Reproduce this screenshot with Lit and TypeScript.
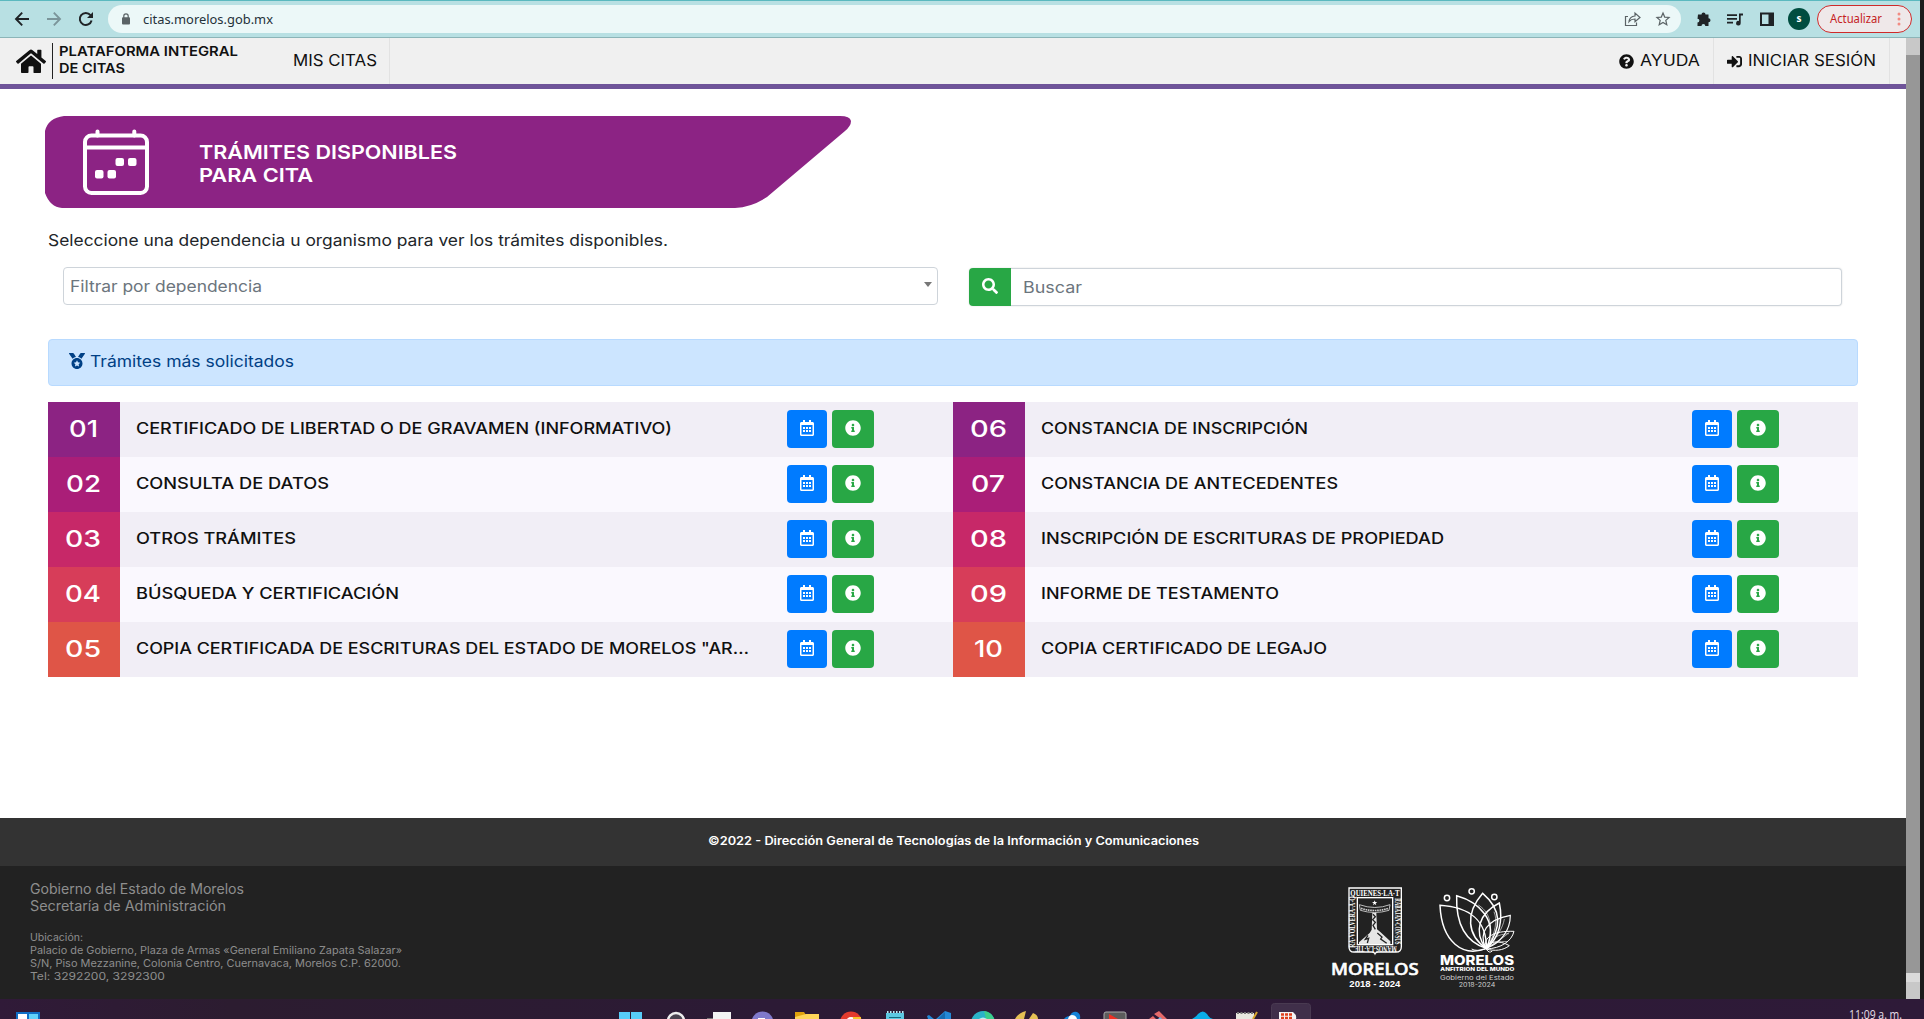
import { LitElement, html, svg, css } from "lit";
import { customElement } from "lit/decorators.js";

const P = {
  home: "M280.37 148.26L96 300.11V464a16 16 0 0 0 16 16l112.06-.29a16 16 0 0 0 15.92-16V368a16 16 0 0 1 16-16h64a16 16 0 0 1 16 16v95.64a16 16 0 0 0 16 16.05L464 480a16 16 0 0 0 16-16V300L295.67 148.26a12.19 12.19 0 0 0-15.3 0zM571.6 251.47L488 182.56V44.05a12 12 0 0 0-12-12h-56a12 12 0 0 0-12 12v72.61L318.47 43a48 48 0 0 0-61 0L4.34 251.47a12 12 0 0 0-1.6 16.9l25.5 31A12 12 0 0 0 45.15 301l235.22-193.74a12.19 12.19 0 0 1 15.3 0L530.9 301a12 12 0 0 0 16.9-1.6l25.5-31a12 12 0 0 0-1.7-16.93z",
  info: "M256 8C119.043 8 8 119.083 8 256c0 136.997 111.043 248 248 248s248-111.003 248-248C504 119.083 392.957 8 256 8zm0 110c23.196 0 42 18.804 42 42s-18.804 42-42 42-42-18.804-42-42 18.804-42 42-42zm56 254c0 6.627-5.373 12-12 12h-88c-6.627 0-12-5.373-12-12v-24c0-6.627 5.373-12 12-12h12v-64h-12c-6.627 0-12-5.373-12-12v-24c0-6.627 5.373-12 12-12h64c6.627 0 12 5.373 12 12v100h12c6.627 0 12 5.373 12 12v24z",
  question: "M504 256c0 136.997-111.043 248-248 248S8 392.997 8 256C8 119.083 119.043 8 256 8s248 111.083 248 248zM262.655 90c-54.497 0-89.255 22.957-116.549 63.758-3.536 5.286-2.353 12.415 2.715 16.258l34.699 26.31c5.205 3.947 12.621 3.008 16.665-2.122 17.864-22.658 30.113-35.797 57.303-35.797 20.429 0 45.698 13.148 45.698 32.958 0 14.976-12.363 22.667-32.534 33.976C247.128 238.528 216 254.941 216 296v4c0 6.627 5.373 12 12 12h56c6.627 0 12-5.373 12-12v-1.333c0-28.462 83.186-29.647 83.186-106.667 0-58.002-60.165-102-116.531-102zM256 338c-25.365 0-46 20.635-46 46 0 25.364 20.635 46 46 46s46-20.636 46-46c0-25.365-20.635-46-46-46z",
  login: "M416 448h-84c-6.6 0-12-5.4-12-12v-40c0-6.600 5.400-12 12-12h84c17.700 0 32-14.300 32-32V160c0-17.700-14.300-32-32-32h-84c-6.600 0-12-5.400-12-12V76c0-6.600 5.400-12 12-12h84c53 0 96 43 96 96v192c0 53-43 96-96 96zm-47-201L201 79c-15-15-41-4.500-41 17v96H24c-13.300 0-24 10.700-24 24v96c0 13.300 10.700 24 24 24h136v96c0 21.500 26 32 41 17l168-168c9.300-9.400 9.300-24.600 0-34z",
  calendar: "M148 288h-40c-6.600 0-12-5.400-12-12v-40c0-6.600 5.400-12 12-12h40c6.600 0 12 5.400 12 12v40c0 6.600-5.400 12-12 12zm108-12v-40c0-6.600-5.400-12-12-12h-40c-6.600 0-12 5.400-12 12v40c0 6.600 5.400 12 12 12h40c6.600 0 12-5.400 12-12zm96 0v-40c0-6.600-5.400-12-12-12h-40c-6.600 0-12 5.400-12 12v40c0 6.600 5.400 12 12 12h40c6.600 0 12-5.400 12-12zm-96 96v-40c0-6.600-5.400-12-12-12h-40c-6.600 0-12 5.400-12 12v40c0 6.600 5.400 12 12 12h40c6.600 0 12-5.400 12-12zm-96 0v-40c0-6.600-5.400-12-12-12h-40c-6.600 0-12 5.400-12 12v40c0 6.600 5.400 12 12 12h40c6.600 0 12-5.400 12-12zm192 0v-40c0-6.600-5.400-12-12-12h-40c-6.600 0-12 5.400-12 12v40c0 6.600 5.400 12 12 12h40c6.600 0 12-5.400 12-12zm96-260v352c0 26.500-21.500 48-48 48H48c-26.500 0-48-21.500-48-48V112c0-26.500 21.500-48 48-48h48V12c0-6.600 5.400-12 12-12h40c6.600 0 12 5.400 12 12v52h128V12c0-6.600 5.400-12 12-12h40c6.600 0 12 5.400 12 12v52h48c26.500 0 48 21.500 48 48zm-48 346V160H48v298c0 3.300 2.700 6 6 6h340c3.300 0 6-2.700 6-6z",
  search: "M505 442.7L405.3 343c-4.500-4.500-10.600-7-17-7H372c27.600-35.300 44-79.700 44-128C416 93.100 322.900 0 208 0S0 93.100 0 208s93.100 208 208 208c48.300 0 92.700-16.400 128-44v16.300c0 6.400 2.500 12.500 7 17l99.700 99.700c9.400 9.400 24.600 9.400 33.900 0l28.300-28.300c9.400-9.400 9.400-24.600.1-34zM208 336c-70.700 0-128-57.200-128-128 0-70.700 57.200-128 128-128 70.700 0 128 57.200 128 128 0 70.700-57.200 128-128 128z",
  medal: "M223.750 130.750L154.620 15.540A32 32 0 0 0 127.180 0H16.030C3.080 0-4.500 14.570 2.920 25.180l111.270 158.960c29.720-27.770 67.520-46.830 109.560-53.390zM495.970 0H384.820c-11.240 0-21.660 5.900-27.440 15.540l-69.130 115.210c42.040 6.560 79.840 25.620 109.560 53.380L509.080 25.180C516.500 14.570 508.920 0 495.970 0zM256 160c-97.200 0-176 78.800-176 176s78.800 176 176 176 176-78.800 176-176-78.800-176-176-176zM256 232l32 66 72 10-52 50 13 72-65-34-65 34 13-72-52-50 72-10z",
};

const icon = (d: string, w: number, h: number, vb = "0 0 512 512") =>
  html`<svg class="ico" width=${w} height=${h} viewBox=${vb}><path fill="currentColor" fill-rule="evenodd" d=${d}></path></svg>`;

/* One line of text set to a fixed measure: w = measure, size = font size,
   h = line box height, b = baseline inside that box. */
const line = (s: string, w: number, size: number, h: number, b: number, weight = 400) =>
  html`<svg class="line" width=${w} height=${h}><text x="0" y=${b} font-size=${size} font-weight=${weight} textLength=${w} lengthAdjust="spacingAndGlyphs">${s}</text></svg>`;

type Item = { n: string; nw: number; title: string; w: number };
const LEFT: Item[] = [
  { n: "01", nw: 29, title: "CERTIFICADO DE LIBERTAD O DE GRAVAMEN (INFORMATIVO)", w: 536 },
  { n: "02", nw: 35, title: "CONSULTA DE DATOS", w: 193 },
  { n: "03", nw: 36, title: "OTROS TRÁMITES", w: 160 },
  { n: "04", nw: 36, title: "BÚSQUEDA Y CERTIFICACIÓN", w: 263 },
  { n: "05", nw: 36, title: "COPIA CERTIFICADA DE ESCRITURAS DEL ESTADO DE MORELOS \"AR…", w: 613 },
];
const RIGHT: Item[] = [
  { n: "06", nw: 37, title: "CONSTANCIA DE INSCRIPCIÓN", w: 267 },
  { n: "07", nw: 34, title: "CONSTANCIA DE ANTECEDENTES", w: 297 },
  { n: "08", nw: 37, title: "INSCRIPCIÓN DE ESCRITURAS DE PROPIEDAD", w: 403 },
  { n: "09", nw: 37, title: "INFORME DE TESTAMENTO", w: 238 },
  { n: "10", nw: 29, title: "COPIA CERTIFICADO DE LEGAJO", w: 286 },
];

@customElement("browser-bar")
export class BrowserBar extends LitElement {
  static styles = css`
    :host { display: flex; box-sizing: border-box; height: 38px; align-items: center; background: #b8e0e3; border-top: 1px solid #5bb9bf; border-bottom: 1px solid #8cb5b8; color: #1f2326; padding: 0 8px 0 15px; font-family: "Noto Sans", "Open Sans", sans-serif; }
    svg { display: block; flex: none; overflow: visible; }
    .nav { display: flex; gap: 18px; width: 93px; }
    .nav svg { width: 14px; height: 14px; }
    .pill { box-sizing: border-box; width: 1573px; height: 28px; border-radius: 14px; background: #ecf8f8; display: flex; align-items: center; padding: 0 5px 0 14px; flex: none; }
    .url { margin-left: 13px; flex: 1; }
    .tools { display: flex; align-items: center; margin-left: 15px; }
    .avatar { width: 22px; height: 22px; border-radius: 50%; background: #004d40; color: #fff; font-size: 10px; font-weight: 700; line-height: 21px; text-align: center; margin-left: 12px; }
    .update { box-sizing: border-box; width: 95px; height: 28px; border: 1px solid #cf2a2a; border-radius: 14px; background: #efe8e9; margin-left: 7px; display: flex; align-items: center; justify-content: space-between; padding: 0 10px 0 12px; }
  `;
  render() {
    return html`
      <div class="nav">
        <svg viewBox="0 0 14 14" fill="none" stroke="#1f2326" stroke-width="1.9"><path d="M14 7H1.500M7.200 .7L1 7l6.200 6.300"></path></svg>
        <svg viewBox="0 0 14 14" fill="none" stroke="#7b959a" stroke-width="1.900"><path d="M0 7h12.500M6.800 .7L13 7l-6.200 6.300"></path></svg>
        <svg viewBox="0 0 14 14" fill="none" stroke="#1f2326" stroke-width="2"><path d="M12.600 8.500A6 6 0 1 1 11.500 3.200"></path><path d="M14 0v6H8z" fill="#1f2326" stroke="none"></path></svg>
      </div>
      <div class="pill">
        <svg width="8" height="12" viewBox="0 0 8 12"><rect y="4.300" width="8" height="7.200" rx="1" fill="#5b6366"></rect><path d="M1.800 5V3a2.200 2.200 0 0 1 4.400 0v2" fill="none" stroke="#5b6366" stroke-width="1.200"></path></svg>
        <svg class="url" height="28"><text x="0" y="18.500" font-size="13" fill="#25323a" textLength="130" lengthAdjust="spacingAndGlyphs">citas.morelos.gob.mx</text></svg>
        <svg width="52" height="16" viewBox="0 0 52 16" fill="none" stroke="#5b6366" stroke-width="1.200"><path d="M4 5.500H1.500v9h11v-3M5 10.500c.5-3.800 2.500-5.300 6-5.500V2l5 4.500-5 4.300V8c-3 0-4.500.7-6 2.500z"></path><path d="M39 2l1.700 4.100 4.400.4-3.300 2.900 1 4.300L39 11.400l-3.800 2.300 1-4.300-3.300-2.900 4.400-.4z"></path></svg>
      </div>
      <div class="tools">
        <svg width="80" height="16" viewBox="0 0 80 16" fill="#1f2326"><path d="M2 3.500h3.500a2 2 0 0 1 4 0h3v3.700a2 2 0 0 1 0 4V15H9.300a1.900 1.900 0 0 0-3.800 0H1.500v-3.500a1.900 1.900 0 0 0 0-3.800z"></path><path d="M31 3.200h10v1.700H31zm0 3.800h10v1.700H31zm0 3.800h6v1.700h-6zM43 2.500h4v2h-2.300v7.700a2.300 2.300 0 1 1-1.700-2.200z"></path><path fill-rule="evenodd" d="M64 1.500h14v13.500H64zm2 2v9.500h6.500V3.500z"></path></svg>
        <div class="avatar">s</div>
        <div class="update">
          <svg width="53" height="20"><text x="0" y="14" font-size="12" fill="#c5221f" textLength="52" lengthAdjust="spacingAndGlyphs">Actualizar</text></svg>
          <svg width="4" height="14" fill="#f28b82"><circle cx="2" cy="2" r="1.500"></circle><circle cx="2" cy="7" r="1.500"></circle><circle cx="2" cy="12" r="1.500"></circle></svg>
        </div>
      </div>`;
  }
}

@customElement("cita-list")
export class CitaList extends LitElement {
  static properties = { items: { attribute: false } };
  declare items: Item[];
  static styles = css`
    :host { display: block; flex: 1; font-family: Inter, "Liberation Sans", sans-serif; }
    svg { display: block; overflow: visible; flex: none; }
    .row { display: flex; height: 55px; background: #f1eef6; align-items: flex-start; color: #101010; fill: currentColor; }
    .row:nth-child(even) { background: #faf8fe; }
    .num { box-sizing: border-box; width: 72px; height: 55px; padding-right: 2px; display: flex; justify-content: center; background: #8c2383; color: #fff; fill: #fff; flex: none; }
    .row:nth-child(2) .num { background: #aa1e78; }
    .row:nth-child(3) .num { background: #c72868; }
    .row:nth-child(4) .num { background: #d73d59; }
    .row:nth-child(5) .num { background: #df5547; }
    .title { width: 651px; padding-left: 16px; }
    .btn { height: 38px; margin-top: 8px; border-radius: 4px; color: #fff; display: flex; align-items: center; justify-content: center; }
    .btn svg { margin-top: -2px; }
    .cal { width: 40px; background: #007bff; }
    .inf { width: 42px; background: #28a745; margin-left: 5px; }
  `;
  render() {
    return this.items.map((i) => html`
      <div class="row">
        <div class="num">${line(i.n, i.nw, 23, 55, 34.600, 500)}</div>
        <div class="title">${line(i.title, i.w, 15.800, 55, 32, 500)}</div>
        <div class="btn cal">${icon(P.calendar, 14, 16, "0 0 448 512")}</div>
        <div class="btn inf">${icon(P.info, 16, 16)}</div>
      </div>`);
  }
}

@customElement("page-footer")
export class PageFooter extends LitElement {
  static styles = css`
    :host { display: block; font-family: Inter, "Liberation Sans", sans-serif; }
    svg { display: block; overflow: visible; flex: none; }
    .copy { height: 48px; background: #333; display: flex; justify-content: center; fill: #fff; }
    .info { height: 133px; background: #222; display: flex; fill: #8e8e8e; }
    .address { width: 1301px; padding: 14px 0 0 30px; }
    .gap { height: 14px; }
    .logos { padding: 21px 0 0 0; display: flex; gap: 20px; fill: #fff; }
  `;
  render() {
    const f = "Inter, Liberation Sans, sans-serif";
    return html`
      <div class="copy">${line("©2022 - Dirección General de Tecnologías de la Información y Comunicaciones", 491, 11.500, 48, 27, 600)}</div>
      <div class="info">
        <div class="address">
          ${line("Gobierno del Estado de Morelos", 214, 13.800, 17, 14)}
          ${line("Secretaría de Administración", 196, 13.800, 17, 14)}
          <div class="gap"></div>
          ${line("Ubicación:", 53, 10.500, 13, 13)}
          ${line("Palacio de Gobierno, Plaza de Armas «General Emiliano Zapata Salazar»", 372, 10.500, 13, 13)}
          ${line("S/N, Piso Mezzanine, Colonia Centro, Cuernavaca, Morelos C.P. 62000.", 371, 10.500, 13, 13)}
          ${line("Tel: 3292200, 3292300", 135, 10.500, 13, 13)}
        </div>
        <div class="logos">
          <svg width="88" height="100" viewBox="65 50 264 300">
            <g fill="none" stroke="#fff"><path d="M119 53h157v176q0 16-16 16h-52q-9 0-11 5-2-5-11-5h-52q-15 0-15-16z" stroke-width="4"></path><rect x="144" y="82" width="106" height="141" stroke-width="4"></rect></g>
            <g font-family="Liberation Serif, serif" font-weight="700" font-size="22" fill="#fff">
              <text x="123" y="76" textLength="148" lengthAdjust="spacingAndGlyphs">QUIENES·LA·T</text>
              <text transform="translate(138 232) rotate(-90)" textLength="154" lengthAdjust="spacingAndGlyphs">RA·VOLVERA·A·Q</text>
              <text transform="translate(256 84) rotate(90)" textLength="138" lengthAdjust="spacingAndGlyphs">RABAJAN·CON·SUS</text>
              <text transform="translate(262 227) rotate(180)" textLength="126" lengthAdjust="spacingAndGlyphs">MANOS·LA·TIE</text>
            </g>
            <path d="M196 90l2 5h6l-5 4 2 6-5-4-5 4 2-6-5-4h6z" fill="#fff"></path>
            <path d="M150 103q47 17 92 0l-3 17q-43 13-86 0z" fill="none" stroke="#bbb" stroke-width="3"></path>
            <path d="M155 114q41 13 82 0" fill="none" stroke="#ccc" stroke-width="5" stroke-dasharray="5 2"></path>
            <path d="M189 127h12l2 50 10 8 30 28v8H149v-5l32-28 6-10z" fill="#e6e6e6"></path>
            <path d="M191 132l7 7-8 9 8 8-7 9 7 12M176 195l-8 12 10-3-4 14M204 188l14 12-4 6 18 13" fill="none" stroke="#222" stroke-width="4"></path>
            <text x="65" y="313" font-family="Noto Sans, Open Sans, sans-serif" font-weight="500" font-size="49" fill="#fff" stroke="#fff" stroke-width="1.800" textLength="263" lengthAdjust="spacingAndGlyphs">MORELOS</text>
            <text x="120" y="350" font-family="Liberation Sans, sans-serif" font-weight="700" font-size="27" fill="#fff" textLength="153" lengthAdjust="spacingAndGlyphs">2018 - 2024</text>
          </svg>
          <svg width="76" height="100" viewBox="388 50 228 300">
            <g fill="none" stroke="#fff" stroke-width="4.500" stroke-linejoin="miter">
              <circle cx="412" cy="83" r="8"></circle><circle cx="486" cy="63" r="8"></circle><circle cx="554" cy="80" r="8"></circle>
              <path d="M530 234C460 262 396 216 391 105C478 110 532 150 530 234"></path>
              <path d="M530 234C470 215 438 165 441 76C505 94 570 150 530 234"></path>
              <path d="M530 234C472 195 466 130 519 69C565 108 588 160 530 234"></path>
              <path d="M528 234C492 184 507 129 569 98C580 150 570 202 530 234"></path>
              <path d="M528 234C506 188 531 148 602 135C602 180 574 218 530 234" stroke-width="3.500"></path>
              <path d="M528 234C520 201 550 181 613 183C606 213 574 234 530 236" stroke-width="3"></path>
              <path d="M528 234C538 212 568 208 599 226C580 241 554 243 530 236" stroke-width="3"></path>
              <path d="M531 234C550 180 548 130 506 104M532 234C558 186 564 150 553 124M532 234C562 200 580 172 584 146M532 234C562 212 586 200 598 186M532 234C548 200 565 192 598 190M532 234C550 217 570 212 592 214" stroke-width="1.800"></path>
              <path d="M528 236q-30 8-42 0M530 236q8 15 18 6" stroke-width="3"></path>
            </g>
            <g font-family=${f} fill="#fff">
              <text x="391" y="284" font-weight="800" font-size="38" textLength="222" lengthAdjust="spacingAndGlyphs">MORELOS</text>
              <text x="392" y="303" font-weight="800" font-size="16" textLength="222" lengthAdjust="spacingAndGlyphs">ANFITRIÓN DEL MUNDO</text>
              <text x="391" y="329" font-size="18" fill="#ccc" textLength="222" lengthAdjust="spacingAndGlyphs">Gobierno del Estado</text>
              <text x="447" y="349" font-size="17" fill="#ccc" textLength="110" lengthAdjust="spacingAndGlyphs">2018-2024</text>
            </g>
          </svg>
        </div>
      </div>`;
  }
}

@customElement("task-bar")
export class TaskBar extends LitElement {
  static styles = css`
    :host { display: flex; height: 20px; background: linear-gradient(90deg, #301a38, #2c1c30 12%, #2c1a35 40%, #2e1a38); overflow: hidden; }
    svg { display: block; flex: none; overflow: visible; }
    .start { margin-left: 16px; }
    .apps { margin-left: 563px; }
    .clock { margin-left: 530px; }
  `;
  render() {
    return html`
      <svg class="start" width="24" height="20"><path fill="#0f6fc6" d="M0 13h24v7H0z"></path><path fill="#fff" d="M2 15h9v5H2z"></path><path fill="#62d2fb" d="M13 15h9v5h-9z"></path></svg>
      <svg class="apps" width="715" height="20" viewBox="603 999 715 20">
        <rect x="1271.500" y="1003.500" width="39" height="24" rx="3" fill="#402f4a" stroke="#493a51"></rect>
        <path fill="#57cdf8" d="M619 1012h11v7h-11zm12 0h11v7h-11z"></path>
        <circle cx="676" cy="1021" r="8" fill="#4a4450" stroke="#eee" stroke-width="2.500"></circle>
        <path fill="#777" d="M707 1018h12v1h-12z"></path><path fill="#f3f3f3" d="M713 1012h18v7h-18z"></path>
        <circle cx="762.500" cy="1022.500" r="11" fill="#7f79cb"></circle><path d="M758 1018.500h7" stroke="#fff"></path>
        <path fill="#e0a20c" d="M795 1012h9l2 3v4h-11z"></path><path fill="#ffd559" d="M795 1017l11-3h13v5h-24z"></path>
        <circle cx="851" cy="1022.500" r="11" fill="#e33b2e"></circle><circle cx="851" cy="1022" r="5" fill="#fff"></circle><path fill="#f7c52b" d="M853 1017h8v2h-8z"></path>
        <path fill="#5cc8e2" d="M886 1013h18v6h-18z"></path><path d="M887 1012h17" stroke="#b7eaf5" stroke-width="2" stroke-dasharray="1.500 1.500"></path><path d="M889 1017.500h12" stroke="#12687d"></path>
        <path fill="#2489d6" d="M927 1016l2-1 5 4h-6zM936 1019l9-8 6 2v6z"></path><path fill="#176bb0" d="M938 1019l7-7v7z"></path>
        <circle cx="983" cy="1023" r="12" fill="#2bb3c9"></circle><path fill="#3ccf8a" d="M984 1011q8 1 10 8h-8z"></path><path fill="#bdf1ee" d="M979 1019q4-3 8 0z"></path>
        <path fill="#e5c054" d="M1015 1019q3-6 11-8l-2 8zM1029 1019l4-6q5 2 5 6z"></path>
        <path fill="#1583d8" d="M1064 1019q2-3 6-3 2-5 7-4 4 2 3 7z"></path><path fill="#fff" d="M1068 1019q1-4 4-4 4 0 5 4z"></path>
        <rect x="1104" y="1012" width="22" height="12" rx="2" fill="#5c5c5c" stroke="#aaa"></rect><path fill="#ee3124" d="M1109 1014l9 5h-9z"></path>
        <path fill="#e66a6a" d="M1154 1014l5-3 8 8h-6zM1149 1019l4-3 3 3z"></path><path fill="#65b8e8" d="M1158 1019l2-2 2 2z"></path>
        <path fill="#09aee8" d="M1192 1019q4-2 6-5 5-5 9 0 2 4 6 5z"></path>
        <path fill="#e8e8df" d="M1236 1013h18v6h-18z"></path><path d="M1237 1013h16" stroke="#777" stroke-width="2" stroke-dasharray="2 1.500"></path><path d="M1257 1012l-4 7" stroke="#d7a52b" stroke-width="2"></path>
        <path fill="#f5f5f5" d="M1279 1012h14q4 3 3 7h-17z"></path><path d="M1281 1014.500h11M1281 1018h11" stroke="#e0401c" stroke-width="2.500" stroke-dasharray="3 1"></path>
      </svg>
      <svg class="clock" width="56" height="20"><text x="1" y="20" font-family="Open Sans, sans-serif" font-size="12.500" fill="#e6dfe8" textLength="53" lengthAdjust="spacingAndGlyphs">11:09 a. m.</text></svg>`;
  }
}

@customElement("app-root")
export class AppRoot extends LitElement {
  static styles = css`
    :host { display: flex; flex-direction: column; width: 1924px; height: 1019px; overflow: hidden; background: #fff; font-family: Inter, "Liberation Sans", sans-serif; color: #212529; }
    svg { display: block; overflow: visible; flex: none; }
    .line { fill: currentColor; }
    .window { display: flex; height: 999px; }
    .edge { width: 4px; background: #1c1c1c; }
    .browser { width: 1920px; }
    .view { display: flex; height: 961px; }
    .page { width: 1906px; display: flex; flex-direction: column; }
    .scroll { width: 14px; display: flex; flex-direction: column; background: #979797; }
    .up { height: 17px; background: #c8c8c8; }
    .track { flex: 1; }
    .thumb { height: 9px; background: #dadada; }
    .down { height: 17px; background: #c8c8c8; }
    .top { box-sizing: border-box; height: 51px; background: #f0f0f0; border-bottom: 5px solid #6f5499; display: flex; color: #111; }
    .brand { box-sizing: border-box; display: flex; align-items: center; padding-left: 16px; width: 255px; }
    .bar { width: 1px; height: 36px; background: #222; margin: 0 6px 0 6px; }
    .names { display: flex; flex-direction: column; height: 36px; }
    .link { box-sizing: border-box; display: flex; align-items: center; gap: 6px; border-right: 1px solid #e2e2e2; height: 46px; padding: 0 13px 0 13px; }
    .first { width: 135px; padding-left: 38px; }
    .space { flex: 1; }
    .last { margin-right: 16px; }
    .main { flex: 1; padding: 27px 48px 0 48px; }
    .banner { height: 92px; margin-left: -3px; }
    .lead { height: 59px; }
    .filters { display: flex; height: 38px; padding: 0 16px 0 15px; }
    .select { box-sizing: border-box; width: 875px; height: 38px; border: 1px solid #ced4da; border-radius: 4px; display: flex; justify-content: space-between; padding: 0 5px 0 6px; color: #6c757d; }
    .caret { border: 4px solid transparent; border-top: 5px solid #777; border-bottom: 0; height: 0; margin-top: 14px; }
    .searchbox { display: flex; width: 873px; height: 38px; margin: 1px 0 0 31px; border-radius: 4px; box-shadow: 0 0 2px rgba(0, 0, 0, 0.14); }
    .go { width: 42px; background: #28a745; color: #fff; border-radius: 4px 0 0 4px; display: flex; align-items: center; justify-content: center; }
    .go svg { margin-top: -2px; }
    .field { box-sizing: border-box; flex: 1; border: 1px solid #ced4da; border-left: 0; border-radius: 0 4px 4px 0; padding-left: 12px; color: #6c757d; }
    .alert { box-sizing: border-box; height: 47px; margin: 34px 0 16px; background: #cce5ff; border: 1px solid #b8daff; border-radius: 4px; display: flex; color: #004085; padding-left: 20px; gap: 5px; }
    .alert .ico { margin-top: 13px; }
    .lists { display: flex; }
  `;
  render() {
    return html`
      <div class="window">
        <div class="browser">
          <browser-bar></browser-bar>
          <div class="view">
            <div class="page">
              <header class="top">
                <div class="brand">
                  ${icon(P.home, 30, 26.700, "0 0 576 512")}
                  <div class="bar"></div>
                  <div class="names">
                    ${line("PLATAFORMA INTEGRAL", 179, 13.500, 17, 13, 600)}
                    ${line("DE CITAS", 66, 13.500, 17, 12.500, 600)}
                  </div>
                </div>
                <div class="link first">${line("MIS CITAS", 84, 15.500, 46, 28)}</div>
                <div class="space"></div>
                <div class="link">${icon(P.question, 15, 15)}${line("AYUDA", 60, 15.500, 46, 28)}</div>
                <div class="link last">${icon(P.login, 15, 15)}${line("INICIAR SESIÓN", 128, 15.500, 46, 28)}</div>
              </header>
              <main class="main">
                <svg class="banner" width="806" height="92" viewBox="45 116 806 92" fill="#fff">
                  <path fill="#8c2384" d="M64 116H840Q850 116 851 121Q851 126 845 131L767 197Q752 207 735 208H62Q50 207 45 193V131Q48 118 64 116z"></path>
                  ${svg`<g fill="none" stroke="#fff" stroke-width="4"><rect x="85" y="135.500" width="62" height="57.500" rx="6.500"></rect><path d="M86 147.500h60M97.500 131.500v4M134.300 131.500v4" stroke-linecap="round"></path></g>
                  <rect x="115.500" y="158" width="8.500" height="8" rx="2"></rect><rect x="128" y="158" width="8.500" height="8" rx="2"></rect><rect x="95" y="170" width="8.500" height="8.500" rx="2"></rect><rect x="107.500" y="170" width="8.500" height="8.500" rx="2"></rect>
                  <g font-size="19.300" font-weight="600"><text x="199" y="158.500" textLength="258" lengthAdjust="spacingAndGlyphs">TRÁMITES DISPONIBLES</text><text x="199" y="182.200" textLength="114" lengthAdjust="spacingAndGlyphs">PARA CITA</text></g>`}
                </svg>
                <div class="lead">${line("Seleccione una dependencia u organismo para ver los trámites disponibles.", 620, 15.500, 59, 38)}</div>
                <div class="filters">
                  <div class="select">${line("Filtrar por dependencia", 192, 16, 36, 24)}<div class="caret"></div></div>
                  <div class="searchbox">
                    <div class="go">${icon(P.search, 16, 16)}</div>
                    <div class="field">${line("Buscar", 59, 16, 36, 24)}</div>
                  </div>
                </div>
                <div class="alert">${icon(P.medal, 16, 16)}${line("Trámites más solicitados", 204, 15.500, 45, 27)}</div>
                <div class="lists">
                  <cita-list .items=${LEFT}></cita-list>
                  <cita-list .items=${RIGHT}></cita-list>
                </div>
              </main>
              <page-footer></page-footer>
            </div>
            <div class="scroll"><div class="up"></div><div class="track"></div><div class="thumb"></div><div class="down"></div></div>
          </div>
        </div>
        <div class="edge"></div>
      </div>
      <task-bar></task-bar>`;
  }
}
